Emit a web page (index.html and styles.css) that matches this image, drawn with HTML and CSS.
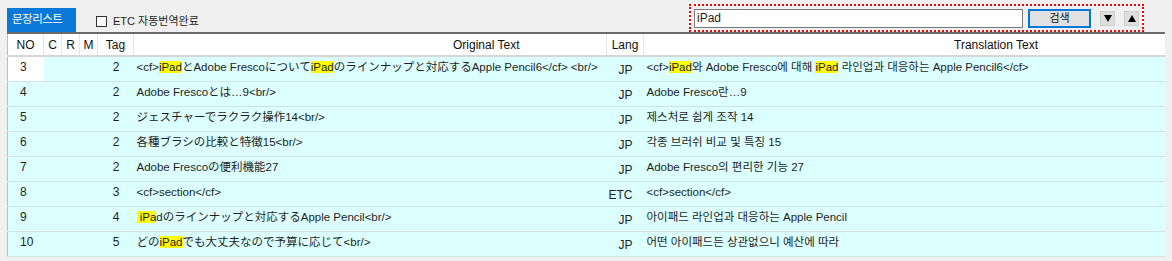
FILE: index.html
```html
<!DOCTYPE html>
<html lang="ko">
<head>
    <meta charset="UTF-8">
    <title>문장리스트</title>
    <link rel="stylesheet" href="styles.css">
</head>
<body>
    <div class="panel">
        <!-- 상단 툴바 -->
        <div class="toolbar">
            <div class="tab">문장리스트</div>
            <label class="check"><span class="box"></span>ETC 자동번역완료</label>
            <div class="search">
                <div class="search-input">iPad</div>
                <button class="search-btn">검색</button>
                <button class="arrow-btn down"><span></span></button>
                <button class="arrow-btn up"><span></span></button>
            </div>
        </div>

        <!-- 문장 목록 -->
        <table class="grid">
            <colgroup>
                <col class="c-no">
                <col class="c-flag">
                <col class="c-flag">
                <col class="c-flag">
                <col class="c-tag">
                <col class="c-orig">
                <col class="c-lang">
                <col class="c-trans">
            </colgroup>
            <thead>
                <tr>
                    <th class="h-no">NO</th>
                    <th>C</th>
                    <th>R</th>
                    <th>M</th>
                    <th>Tag</th>
                    <th class="h-orig">Original Text</th>
                    <th>Lang</th>
                    <th class="h-trans">Translation Text</th>
                </tr>
            </thead>
            <tbody>
                <tr>
                    <td class="no current">3</td><td></td><td></td><td></td>
                    <td class="tag">2</td>
                    <td class="txt">&lt;cf&gt;<mark>iPad</mark>とAdobe Frescoについて<mark>iPad</mark>のラインナップと対応するApple Pencil6&lt;/cf&gt; &lt;br/&gt;</td>
                    <td class="lang">JP</td>
                    <td class="txt">&lt;cf&gt;<mark>iPad</mark>와 Adobe Fresco에 대해 <mark>iPad</mark> 라인업과 대응하는 Apple Pencil6&lt;/cf&gt;</td>
                </tr>
                <tr>
                    <td class="no">4</td><td></td><td></td><td></td>
                    <td class="tag">2</td>
                    <td class="txt">Adobe Frescoとは…9&lt;br/&gt;</td>
                    <td class="lang">JP</td>
                    <td class="txt">Adobe Fresco란…9</td>
                </tr>
                <tr>
                    <td class="no">5</td><td></td><td></td><td></td>
                    <td class="tag">2</td>
                    <td class="txt">ジェスチャーでラクラク操作14&lt;br/&gt;</td>
                    <td class="lang">JP</td>
                    <td class="txt">제스처로 쉽게 조작 14</td>
                </tr>
                <tr>
                    <td class="no">6</td><td></td><td></td><td></td>
                    <td class="tag">2</td>
                    <td class="txt">各種ブラシの比較と特徴15&lt;br/&gt;</td>
                    <td class="lang">JP</td>
                    <td class="txt">각종 브러쉬 비교 및 특징 15</td>
                </tr>
                <tr>
                    <td class="no">7</td><td></td><td></td><td></td>
                    <td class="tag">2</td>
                    <td class="txt">Adobe Frescoの便利機能27</td>
                    <td class="lang">JP</td>
                    <td class="txt">Adobe Fresco의 편리한 기능 27</td>
                </tr>
                <tr>
                    <td class="no">8</td><td></td><td></td><td></td>
                    <td class="tag">3</td>
                    <td class="txt">&lt;cf&gt;section&lt;/cf&gt;</td>
                    <td class="lang">ETC</td>
                    <td class="txt">&lt;cf&gt;section&lt;/cf&gt;</td>
                </tr>
                <tr>
                    <td class="no">9</td><td></td><td></td><td></td>
                    <td class="tag">4</td>
                    <td class="txt"><mark>&nbsp;iPa</mark>dのラインナップと対応するApple Pencil&lt;br/&gt;</td>
                    <td class="lang">JP</td>
                    <td class="txt">아이패드 라인업과 대응하는 Apple Pencil</td>
                </tr>
                <tr>
                    <td class="no">10</td><td></td><td></td><td></td>
                    <td class="tag">5</td>
                    <td class="txt">どの<mark>iPad</mark>でも大丈夫なので予算に応じて&lt;br/&gt;</td>
                    <td class="lang">JP</td>
                    <td class="txt">어떤 아이패드든 상관없으니 예산에 따라</td>
                </tr>
            </tbody>
        </table>
    </div>
</body>
</html>
```

FILE: styles.css
```css
body {
    margin: 0;
    background-color: #f0f0f0;
    font-family: "Liberation Sans", "Noto Sans CJK KR", "Noto Sans CJK JP", sans-serif;
    font-size: 12px;
    color: #1e1e1e;
}

.panel {
    width: 1157px;
    margin-left: 7px;
}

/* 툴바 */
.toolbar {
    display: flex;
    align-items: flex-end;
    height: 32px;
}

.tab {
    width: 69px;
    height: 24px;
    line-height: 23px;
    padding-left: 5px;
    box-sizing: border-box;
    background-color: #0a78d6;
    color: #fff;
    font-size: 11.5px;
    letter-spacing: -0.5px;
}

.check {
    display: flex;
    align-items: center;
    align-self: flex-start;
    margin-top: 14px;
    margin-left: 20px;
    font-size: 11px;
    line-height: 14px;
}

.check .box {
    width: 11px;
    height: 11px;
    box-sizing: border-box;
    border: 1px solid #333;
    background: #fff;
    margin-right: 6px;
}

.search {
    display: flex;
    align-items: center;
    margin-left: auto;
    margin-right: 20px;
    width: 455px;
    height: 28px;
    box-sizing: border-box;
    padding: 0 3px;
    border: 2px dotted #ff0000;
    background: linear-gradient(#f0f0f0, #f0f0f0) padding-box, #fff border-box;
}

.search-input {
    width: 330px;
    height: 19px;
    box-sizing: border-box;
    border: 1px solid #7a7a7a;
    background: #fff;
    padding-left: 2px;
    line-height: 17px;
    font-size: 12px;
}

.search-btn {
    width: 63px;
    height: 19px;
    margin-left: 5px;
    padding: 0;
    box-sizing: border-box;
    border: 1px solid #0078d7;
    box-shadow: inset 0 0 0 1px #0078d7;
    background: #e1e1e1;
    font-family: inherit;
    font-size: 11px;
    line-height: 15px;
    color: #111;
}

.arrow-btn {
    width: 15px;
    height: 15px;
    padding: 0;
    margin-left: 9px;
    box-sizing: border-box;
    border: 1px solid #cfcfcf;
    background: #dedede;
    display: flex;
    align-items: center;
    justify-content: center;
}

.arrow-btn span {
    width: 0;
    height: 0;
    border-left: 4px solid transparent;
    border-right: 4px solid transparent;
}

.arrow-btn.down span {
    border-top: 7px solid #000;
}

.arrow-btn.up span {
    border-bottom: 7px solid #000;
}

/* 목록 */
.grid {
    width: 1157px;
    table-layout: fixed;
    border-collapse: collapse;
    border-top: 2px solid #6b6b6b;
    border-left: 1px solid #b4c4c4;
}

.c-no { width: 36px; }
.c-flag { width: 18px; }
.c-tag { width: 36px; }
.c-orig { width: 473px; }
.c-lang { width: 37px; }
.c-trans { width: 521px; }

.grid th {
    height: 23px;
    box-sizing: border-box;
    padding: 0;
    background: #fff;
    font-weight: normal;
    font-size: 12px;
    line-height: 16px;
    color: #111;
    border-right: 1px solid #e6e6e6;
    border-bottom: 2px solid #d6d6d6;
}

.grid th:last-child {
    border-right: none;
}

.grid th.h-orig {
    text-align: left;
    padding-left: 319px;
}

.grid th.h-trans {
    text-align: left;
    padding-left: 310px;
}

.grid td {
    height: 25px;
    box-sizing: border-box;
    padding: 0 0 3px;
    line-height: 16px;
    background: #dcffff;
    border-bottom: 1px solid #d0e2e2;
    white-space: nowrap;
    overflow: hidden;
}

.grid td.no {
    padding-left: 12px;
}

.grid td.current {
    background: #fff;
}

.grid td.tag {
    text-align: right;
    padding-right: 14px;
}

.grid td.txt {
    padding-left: 3px;
    font-size: 11.5px;
}

.grid td.lang {
    text-align: right;
    padding-right: 11px;
    padding-top: 2px;
    padding-bottom: 0;
}

mark {
    background: #ffff00;
    color: inherit;
}
```
